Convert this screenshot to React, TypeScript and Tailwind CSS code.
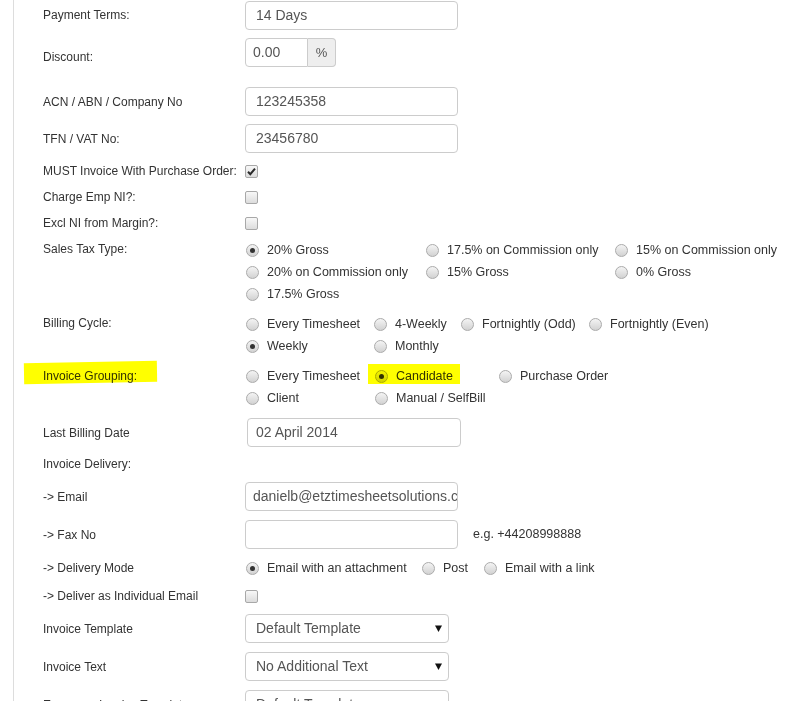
import React from "react";
import clsx from "clsx";

function Radio({ checked = false }: { checked?: boolean }) {
  return (
    <span className="ml-px flex h-[13px] w-[13px] shrink-0 items-center justify-center rounded-full border border-[#ababab] bg-gradient-to-b from-[#f4f4f4] to-[#d2d2d2]">
      {checked && <span className="h-[5px] w-[5px] rounded-full bg-[#333]" />}
    </span>
  );
}

function Check({ checked = false }: { checked?: boolean }) {
  return (
    <span className="flex h-[13px] w-[13px] items-center justify-center rounded-[2px] border border-[#a8a8a8] bg-gradient-to-b from-[#f8f8f8] to-[#dcdcdc]">
      {checked && (
        <svg width="11" height="11" viewBox="0 0 11 11">
          <path d="M2 5.8 L4.3 8.2 L9 2.6" fill="none" stroke="#2a2a2a" strokeWidth="2" />
        </svg>
      )}
    </span>
  );
}

function Opt({ label, checked, className }: { label: string; checked?: boolean; className?: string }) {
  return (
    <div className={clsx("flex h-[22px] items-center whitespace-nowrap text-[12.5px]", className)}>
      <Radio checked={checked} />
      <span className="ml-[8px]">{label}</span>
    </div>
  );
}

function Row({
  className,
  label,
  labelClass,
  children,
}: {
  className?: string;
  label: React.ReactNode;
  labelClass?: string;
  children?: React.ReactNode;
}) {
  return (
    <div className={clsx("flex items-center", className)}>
      <div className={clsx("w-[202px] shrink-0 whitespace-nowrap", labelClass)}>{label}</div>
      {children}
    </div>
  );
}

function TextBox({ value, className }: { value: string; className?: string }) {
  return (
    <div
      className={clsx(
        "flex h-[29px] items-center overflow-hidden whitespace-nowrap rounded-[4px] border border-[#ccc] text-[14px] text-[#555]",
        className
      )}
    >
      {value}
    </div>
  );
}

function Select({ value }: { value: string }) {
  return (
    <div className="flex h-[29px] w-[204px] items-center justify-between rounded-[4px] border border-[#ccc] pl-[10px] pr-[6px] text-[14px] text-[#555]">
      <span>{value}</span>
      <svg width="7" height="7" viewBox="0 0 7 7">
        <polygon points="0,0.5 7,0.5 3.5,7" fill="#111" />
      </svg>
    </div>
  );
}

export default function App() {
  return (
    <div className="h-[701px] overflow-hidden bg-white font-['Liberation_Sans',Arial,sans-serif] text-[12px] text-[#333]">
      <div className="ml-[13px] h-full border-l border-[#ddd] pl-[29px]">
        <Row className="h-[30px]" label="Payment Terms:">
          <TextBox value="14 Days" className="w-[213px] pl-[10px]" />
        </Row>

        <Row className="mt-[8px] h-[29px]" label="Discount:" labelClass="pt-[9px]">
          <div className="flex h-[29px]">
            <div className="flex w-[63px] items-center rounded-l-[4px] border border-[#ccc] pl-[7px] text-[14px] text-[#555]">
              0.00
            </div>
            <div className="flex w-[28px] items-center justify-center rounded-r-[4px] border border-l-0 border-[#ccc] bg-[#eee] text-[13px] text-[#555]">
              %
            </div>
          </div>
        </Row>

        <Row className="mt-[20px] h-[29px]" label="ACN / ABN / Company No">
          <TextBox value="123245358" className="w-[213px] pl-[10px]" />
        </Row>

        <Row className="mt-[8px] h-[29px]" label="TFN / VAT No:">
          <TextBox value="23456780" className="w-[213px] pl-[10px]" />
        </Row>

        <Row className="mt-[10px] h-[16px]" label="MUST Invoice With Purchase Order:">
          <Check checked />
        </Row>
        <Row className="mt-[10px] h-[16px]" label="Charge Emp NI?:">
          <Check />
        </Row>
        <Row className="mt-[10px] h-[16px]" label="Excl NI from Margin?:">
          <Check />
        </Row>

        <div className="mt-[8px] flex items-start">
          <div className="w-[202px] shrink-0 leading-[20px]">Sales Tax Type:</div>
          <div className="grid grid-cols-[180px_189px_auto]">
            <Opt label="20% Gross" checked />
            <Opt label="17.5% on Commission only" />
            <Opt label="15% on Commission only" />
            <Opt label="20% on Commission only" />
            <Opt label="15% Gross" />
            <Opt label="0% Gross" />
            <Opt label="17.5% Gross" />
          </div>
        </div>

        <div className="mt-[8px] flex items-start">
          <div className="w-[202px] shrink-0 leading-[20px]">Billing Cycle:</div>
          <div className="grid grid-cols-[128px_87px_128px_auto]">
            <Opt label="Every Timesheet" />
            <Opt label="4-Weekly" />
            <Opt label="Fortnightly (Odd)" />
            <Opt label="Fortnightly (Even)" />
            <Opt label="Weekly" checked />
            <Opt label="Monthly" />
          </div>
        </div>

        <div className="mt-[8px] flex items-start">
          <div className="relative w-[202px] shrink-0 leading-[22px]">
            <span className="absolute left-[-19px] top-[-3px] h-[21px] w-[133px] -rotate-[1deg] bg-[#ffff00] mix-blend-multiply" />
            <span className="relative mix-blend-multiply">Invoice Grouping:</span>
          </div>
          <div className="grid grid-cols-[129px_124px_auto]">
            <Opt label="Every Timesheet" />
            <div className="relative">
              <Opt label="Candidate" checked />
              <span className="absolute left-[-6px] top-[-1px] h-[20px] w-[92px] bg-[#ffff00] mix-blend-multiply" />
            </div>
            <Opt label="Purchase Order" />
            <Opt label="Client" />
            <Opt label="Manual / SelfBill" />
          </div>
        </div>

        <Row className="mt-[9px] h-[29px]" label="Last Billing Date">
          <TextBox value="02 April 2014" className="ml-[2px] w-[214px] pl-[8px]" />
        </Row>

        <Row className="mt-[9px] h-[16px]" label="Invoice Delivery:" />

        <Row className="mt-[10px] h-[29px]" label="-> Email">
          <TextBox value="danielb@etztimesheetsolutions.com" className="w-[213px] pl-[7px]" />
        </Row>

        <Row className="mt-[9px] h-[29px]" label="-> Fax No">
          <TextBox value="" className="w-[213px]" />
          <span className="ml-[15px] text-[12.5px]">e.g. +44208998888</span>
        </Row>

        <Row className="mt-[11px] h-[16px]" label="-> Delivery Mode">
          <div className="grid grid-cols-[176px_62px_auto]">
            <Opt label="Email with an attachment" checked />
            <Opt label="Post" />
            <Opt label="Email with a link" />
          </div>
        </Row>

        <Row className="mt-[12px] h-[16px]" label="-> Deliver as Individual Email">
          <Check />
        </Row>

        <Row className="mt-[10px] h-[29px]" label="Invoice Template">
          <Select value="Default Template" />
        </Row>

        <Row className="mt-[9px] h-[29px]" label="Invoice Text">
          <Select value="No Additional Text" />
        </Row>

        <Row className="mt-[9px] h-[29px]" label="Expenses Invoice Template">
          <Select value="Default Template" />
        </Row>
      </div>
    </div>
  );
}
